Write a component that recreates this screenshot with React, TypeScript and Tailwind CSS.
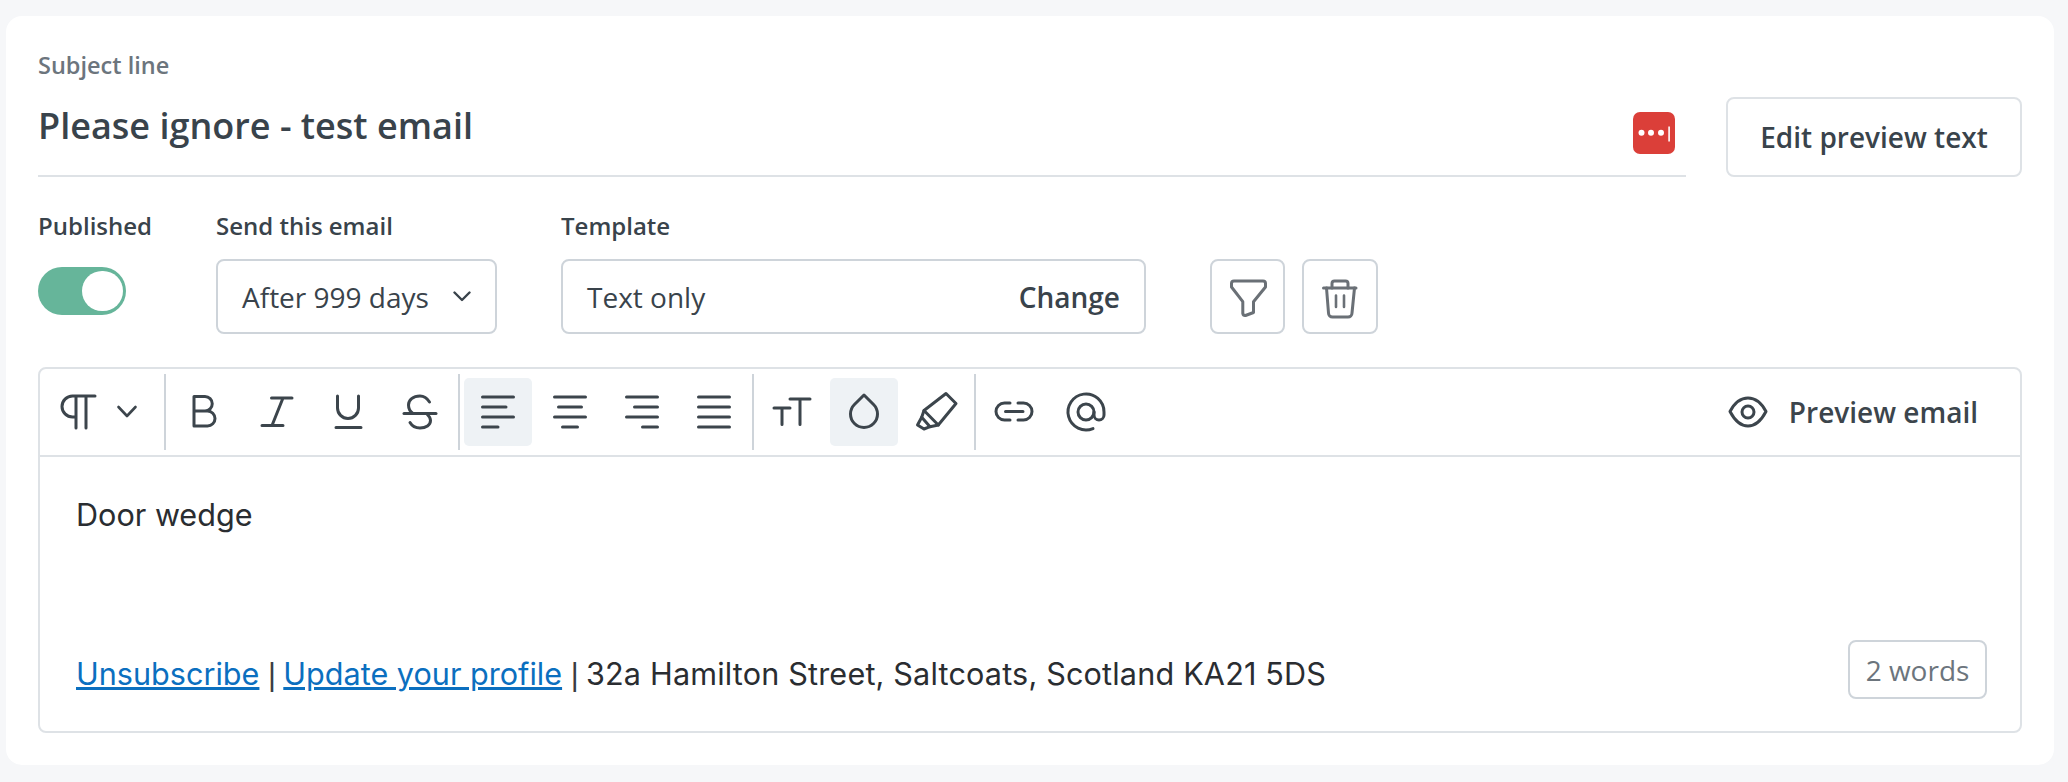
const open = "font-['Open_Sans',sans-serif]";
const pipe = "font-['Liberation_Sans',sans-serif] text-[#3a3d42] mr-[-1.3px]";

// cell svgs use the page's own pixel coordinates as viewBox
const Glyph = ({ x, active, children }: { x: number; active?: boolean; children: React.ReactNode }) => (
  <button className={`w-[68px] h-[68px] shrink-0 rounded-[5px] ${active ? 'bg-[#eef2f5]' : ''}`}>
    <svg
      width="68"
      height="68"
      viewBox={`${x} 378 68 68`}
      fill="none"
      stroke="#3c454c"
      strokeWidth="3"
      strokeLinecap="round"
      strokeLinejoin="round"
    >
      {children}
    </svg>
  </button>
);

const Divider = () => <div className="w-[2px] h-[76px] shrink-0 bg-[#ced4da]" />;

export default function App() {
  return (
    <div className={`min-h-[782px] bg-[#f6f7f9] pl-[6px] pt-4 ${open}`}>
      <div className="w-[2048px] h-[749px] rounded-2xl bg-white px-8 pt-[34px]">
        {/* subject */}
        <div className="flex items-end h-[127px]">
          <div className="w-[1648px] h-[127px] border-b-2 border-[#dee2e6]">
            <div className="text-[23.5px] leading-[30px] font-semibold text-[#6c757d]">Subject line</div>
            <div className="flex items-center justify-between h-[95px] pr-[11px]">
              <span className="text-[36px] font-semibold text-[#39434b] pb-[3px]">Please ignore - test email</span>
              <svg width="42" height="42" viewBox="0 0 42 42" className="mt-[11px]">
                <rect width="42" height="42" rx="7" fill="#db3f39" />
                <circle cx="8.5" cy="20.8" r="3" fill="#fff" />
                <circle cx="18" cy="20.8" r="3" fill="#fff" />
                <circle cx="28" cy="20.8" r="3" fill="#fff" />
                <rect x="35.3" y="14.5" width="1.6" height="15" fill="#fff" />
              </svg>
            </div>
          </div>
          <button className="ml-10 w-[296px] h-[80px] rounded-lg border-2 border-[#dee2e6] text-[28px] font-semibold text-[#39434b]">
            Edit preview text
          </button>
        </div>

        {/* settings */}
        <div className="flex items-start pt-[34px]">
          <div className="w-[178px] shrink-0">
            <div className="h-[30px] leading-[30px] text-[24px] font-semibold text-[#39434b]">Published</div>
            <div className="mt-[26px] w-[88px] h-[48px] rounded-full bg-[#66b59a] flex items-center justify-end pr-[3px]">
              <div className="w-[41px] h-[40px] rounded-full bg-white" />
            </div>
          </div>
          <div className="w-[345px] shrink-0">
            <div className="h-[30px] leading-[30px] text-[24px] font-semibold text-[#39434b]">Send this email</div>
            <div className="mt-[18px] w-[281px] h-[75px] rounded-lg border-2 border-[#ced4da] flex items-center justify-between pl-[24px] pr-[24px]">
              <span className="text-[28px] text-[#39434b]">After 999 days</span>
              <svg width="18" height="11" viewBox="0 0 18 11" fill="none" stroke="#39434b" strokeWidth="2.4" strokeLinecap="round" strokeLinejoin="round">
                <path d="M1.5 1.5l7.5 7.5 7.5-7.5" />
              </svg>
            </div>
          </div>
          <div className="w-[649px] shrink-0">
            <div className="h-[30px] leading-[30px] text-[24px] font-semibold text-[#39434b]">Template</div>
            <div className="mt-[18px] w-[585px] h-[75px] rounded-lg border-2 border-[#ced4da] flex items-center justify-between pl-[24px] pr-[24px]">
              <span className="text-[28px] text-[#39434b]">Text only</span>
              <span className="text-[28px] font-semibold text-[#39434b]">Change</span>
            </div>
          </div>
          <div className="flex gap-[17px] mt-[48px]">
            <button className="w-[75px] h-[75px] rounded-lg border-2 border-[#ced4da]">
              <svg width="71" height="71" viewBox="1212 261 71 71" fill="none" stroke="#6a7076" strokeWidth="3" strokeLinejoin="round" strokeLinecap="round">
                <path d="M1234 281H1263a2.5 2.5 0 0 1 2.5 2.5V287L1253.5 301.7V312.5L1245.5 315.5a2.5 2.5 0 0 1 -2.7-2V301.7L1231.5 287V283.5a2.5 2.5 0 0 1 2.5-2.5Z" />
              </svg>
            </button>
            <button className="w-[76px] h-[75px] rounded-lg border-2 border-[#ced4da]">
              <svg width="72" height="71" viewBox="1304 261 72 71" fill="none" stroke="#6a7076" strokeWidth="3" strokeLinejoin="round" strokeLinecap="round">
                <path d="M1323.5 288H1356" />
                <path d="M1332 288V283.5a2.5 2.5 0 0 1 2.5-2.5H1345.5a2.5 2.5 0 0 1 2.5 2.5V288" />
                <path d="M1326.5 288L1328.5 313a4 4 0 0 0 4 4H1348a4 4 0 0 0 4-4L1354.5 288" />
                <path d="M1336 295.5V307M1344 295.5V307" strokeWidth="2.6" />
              </svg>
            </button>
          </div>
        </div>

        {/* editor */}
        <div className="mt-[33px] h-[366px] rounded-lg border-2 border-[#dee2e6] flex flex-col">
          <div className="h-[88px] shrink-0 border-b-2 border-[#dee2e6] flex items-center gap-1 pl-[3px] pb-px">
            <Glyph x={43}>
              <path d="M76 428V396M86 428V396M95 396H72.5a10.5 10.5 0 0 0 0 21H76" />
            </Glyph>
            <div className="w-[45px] shrink-0">
              <svg width="24" height="14" viewBox="114 405 24 14" fill="none" stroke="#3c454c" strokeWidth="2.6" strokeLinecap="round" strokeLinejoin="round">
                <path d="M117.5 407l8.5 9 8.5-9" />
              </svg>
            </div>
            <Divider />
            <Glyph x={170}>
              <path d="M194 396.5h11a7.25 7.25 0 0 1 0 14.5h-11zM205 411h2.5a7.5 7.5 0 0 1 0 15H194v-15" />
            </Glyph>
            <Glyph x={242}>
              <path d="M271.5 398H292M262 425.5H283M283 398L272 425.5" />
            </Glyph>
            <Glyph x={314}>
              <path d="M337.5 396v12a10.5 10.5 0 0 0 21 0v-12M336 427.5H361" />
            </Glyph>
            <Glyph x={386}>
              <path d="M404 413.5H436" />
              <path d="M429.5 402C427 398 423.5 396 420 396C413 396 408.5 400 408.5 405C408.5 408.5 410 411.5 413 413.5" />
              <path d="M427 414C429 416 430.5 418 430.5 420.5C430.5 425 426 428 420 428C416 428 412 426 410 422.5" />
            </Glyph>
            <Divider />
            <Glyph x={464} active>
              <path d="M482.5 397H513.5M482.5 407H506M482.5 417H513.5M482.5 427H498" />
            </Glyph>
            <Glyph x={536}>
              <path d="M554.5 397H585.5M558.5 407H581.5M554.5 417H585.5M562.5 427H577.5" />
            </Glyph>
            <Glyph x={608}>
              <path d="M626.5 397H657.5M634.5 407H657.5M626.5 417H657.5M642.5 427H657.5" />
            </Glyph>
            <Glyph x={680}>
              <path d="M698.5 397H729.5M698.5 407H729.5M698.5 417H729.5M698.5 427H729.5" />
            </Glyph>
            <Divider />
            <Glyph x={758}>
              <path d="M774 408H790M782 408V424.5M790 399H810M800 399V424.5" />
            </Glyph>
            <Glyph x={830} active>
              <path d="M864 395L854.45 404.45A13.5 13.5 0 1 0 873.55 404.45Z" />
            </Glyph>
            <Glyph x={902}>
              <path d="M946 393.5L956 403.5L938.3 425L924 410.5Z" />
              <path d="M924 410.5L921.7 417.3L930 426.7L938.3 425" />
              <path d="M921.7 417.3L917.5 425L924 429L930 426.7" />
            </Glyph>
            <Divider />
            <Glyph x={980}>
              <path d="M1010 403H1004.5a8.5 8.5 0 0 0 0 17H1010M1018 403H1023.5a8.5 8.5 0 0 1 0 17H1018M1005.5 411.5H1023" />
            </Glyph>
            <Glyph x={1052}>
              <circle cx="1086" cy="412" r="8" />
              <path d="M1094 412v3a5 5 0 0 0 10 0v-3a18 18 0 1 0 -11 16.56" />
            </Glyph>
            <div className="ml-auto flex items-center gap-[20px] pr-[42px]">
              <svg width="42" height="34" viewBox="1728 396 42 34" fill="none" stroke="#3c454c" strokeWidth="3" strokeLinecap="round" strokeLinejoin="round">
                <path d="M1731 412.5C1736 403 1742 399 1749 399C1756 399 1762 403 1767 412.5C1762 422 1756 427 1749 427C1742 427 1736 422 1731 412.5Z" />
                <circle cx="1749" cy="413" r="6" />
              </svg>
              <span className="text-[28px] font-semibold text-[#3c454c]">Preview email</span>
            </div>
          </div>
          <div className="flex-1 flex flex-col justify-between pl-9 pr-[33px] font-['Inter',sans-serif] text-[#2a2d31]">
            <div className="pt-[38px] text-[30.6px] leading-[40px]">Door wedge</div>
            <div className="flex items-end justify-between pb-[32px]">
              <div className="text-[30.6px] leading-[40px] pb-[5px]">
                <a className="text-[#0b6fbf] underline">Unsubscribe</a> <span className={pipe}>|</span> <a className="text-[#0b6fbf] underline">Update your profile</a> <span className={pipe}>|</span>{' '}
                <span className="tracking-[0.17px]">32a Hamilton Street, Saltcoats, Scotland KA21 5DS</span>
              </div>
              <div className={`w-[139px] h-[59px] rounded-lg border-2 border-[#ced4da] flex items-center justify-center text-[28px] text-[#6c757d] ${open}`}>
                2 words
              </div>
            </div>
          </div>
        </div>
      </div>
    </div>
  );
}
